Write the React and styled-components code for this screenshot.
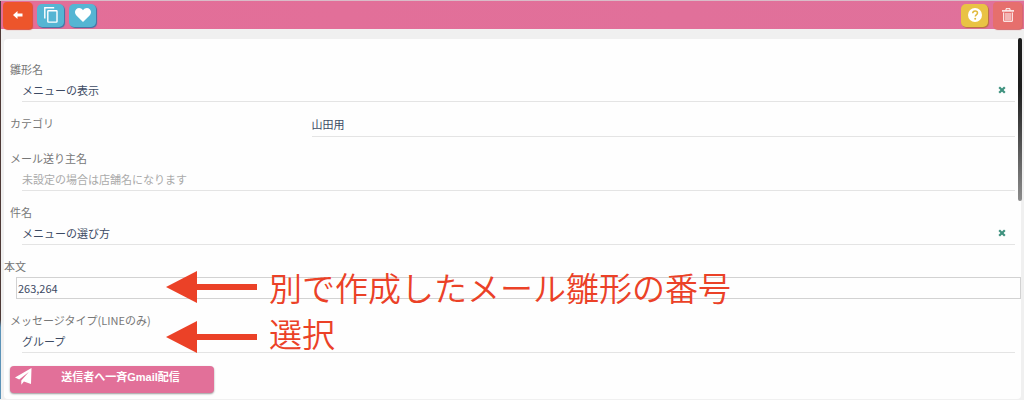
import styled, { createGlobalStyle } from 'styled-components';

const GlobalStyle = createGlobalStyle`
  * {
    box-sizing: border-box;
  }

  body {
    margin: 0;
    background: #f0f0f0;
    font-family: 'Noto Sans CJK JP', sans-serif;
    font-size: 11px;
    line-height: 16px;
    color: #777;
  }

  button,
  input,
  select,
  textarea {
    font: inherit;
  }
`;

const Page = styled.div`
  position: relative;
  padding-left: 1px;
  border-top: 1px solid #d9bcc8;
  background: linear-gradient(#4e3a36 0 80%, #5c93b8 82%) left / 1px 100% no-repeat;
`;

const Toolbar = styled.header`
  display: flex;
  align-items: center;
  justify-content: space-between;
  height: 28px;
  padding: 0 2px;
  background: linear-gradient(90deg, #e36e98, #e0719b);
`;

const ToolGroup = styled.div`
  display: flex;
  align-items: center;
  gap: 5px;
`;

const ToolButton = styled.button`
  display: flex;
  align-items: center;
  justify-content: center;
  width: ${(props) => (props.$large ? 29 : 27)}px;
  height: ${(props) => (props.$large ? 27 : 23)}px;
  padding: 0;
  border: 0;
  border-radius: ${(props) => (props.$large ? 4 : 5)}px;
  color: #fff;
  background: ${(props) => props.$color};
  box-shadow: 1px 1px 1px ${(props) => props.$shadow};
`;

const Card = styled.main`
  margin: 10px 3px 0;
  padding: 22px 0 6px;
  border-radius: 4px;
  background: #fefefe;
`;

const Form = styled.form`
  display: flex;
  flex-direction: column;
  gap: 13px;
`;

const Field = styled.div`
  position: relative;
  display: flex;
  flex-direction: column;
  padding: 0 6px;
`;

const SplitField = styled(Field)`
  display: grid;
  grid-template-columns: 3fr 7fr;
`;

const BodyField = styled(Field)`
  gap: 3px;
  padding: 0;
`;

const Label = styled.label`
  height: 16px;
`;

const InputLine = styled.div`
  display: flex;
  align-items: center;
  height: 25px;
  margin-left: 12px;
  padding: 2px 9px 0 0;
  border-bottom: 1px solid #e4e4e4;
`;

const SplitLine = styled(InputLine)`
  height: 22px;
  margin-left: 0;
  padding: 0 0 4px;
`;

const TextInput = styled.input`
  flex: 1;
  min-width: 0;
  padding: 0;
  border: 0;
  outline: 0;
  color: #3c4a63;
  background: transparent;

  &::placeholder {
    color: #aaa;
    opacity: 1;
  }
`;

const Select = styled.select`
  flex: 1;
  padding: 0;
  border: 0;
  outline: 0;
  appearance: none;
  color: #3c4a63;
  background: transparent;
`;

const BodyText = styled.textarea`
  display: block;
  height: 22px;
  margin-left: 12px;
  padding: 2px 1px;
  border: 1px solid #d2d2d2;
  outline: 0;
  resize: none;
  overflow: hidden;
  color: #3c4a63;
  background: transparent;
`;

const ClearButton = styled.button`
  display: flex;
  padding: 0;
  border: 0;
  color: #3f927f;
  background: none;
`;

const SendButton = styled.button`
  display: flex;
  width: 204px;
  height: 27px;
  margin-left: 6px;
  padding: 2px 5px;
  border: 0;
  border-radius: 4px;
  font-family: 'Liberation Sans', 'Noto Sans CJK JP', sans-serif;
  font-weight: 700;
  color: #fff;
  background: #e27099;
  box-shadow: 0 1px 2px rgba(0, 0, 0, 0.4);
`;

const SendText = styled.span`
  flex: 1;
  padding-top: 1px;
`;

const Note = styled.div`
  position: absolute;
  top: ${(props) => props.$top}px;
  left: 162px;
  display: flex;
  align-items: ${(props) => props.$align || 'center'};
  gap: 12px;
  height: 40px;
  font-size: 33px;
  font-weight: 350;
  line-height: 40px;
  white-space: nowrap;
  color: #eb4127;
  pointer-events: none;
`;

const NoteText = styled.span`
  height: 40px;
`;

const ScrollThumb = styled.div`
  position: absolute;
  top: 37px;
  right: 2px;
  width: 4px;
  height: 163px;
  border-radius: 2px;
  background: linear-gradient(#1d1d1d 30%, #333 45%, #8c8c8c);
`;

function BackIcon() {
  return (
    <svg width="10" height="8" viewBox="0 0 10 8" fill="currentColor">
      <path d="M0 4 4.500 0v2.600H9.500v2.800H4.500V8z" />
    </svg>
  );
}

function CopyIcon() {
  return (
    <svg width="14" height="16" viewBox="0 0 14 16" fill="none" stroke="currentColor" strokeWidth="1.4">
      <path d="M.8 11.5V.8h9.400" />
      <rect x="3.8" y="3.7" width="9.2" height="11.4" rx=".6" />
    </svg>
  );
}

function HeartIcon() {
  return (
    <svg width="16" height="14" viewBox="0 0 16 14" fill="currentColor">
      <path d="M8 14 1.400 7.600C-.5 5.700-.4 2.700 1.200 1.200 3.100-.5 6.300-.3 8 2.300 9.700-.3 12.900-.5 14.800 1.200c1.600 1.500 1.700 4.500-.2 6.400z" />
    </svg>
  );
}

function HelpIcon() {
  return (
    <svg width="14" height="14" viewBox="0 0 14 14">
      <circle cx="7" cy="7" r="7" fill="#fff" />
      <path d="M4.700 5.200C4.800 3.600 5.700 2.900 7.100 2.900c1.400 0 2.400.8 2.400 2 0 1.700-2.200 1.800-2.200 3.700" fill="none" stroke="#e0b93c" strokeWidth="1.5" />
      <circle cx="7.2" cy="10.7" r="1" fill="#e0b93c" />
    </svg>
  );
}

function TrashIcon() {
  return (
    <svg width="12" height="14" viewBox="0 0 12 14" fill="none" stroke="currentColor">
      <path d="M0 2.900h12" strokeWidth="1.4" />
      <path d="M4 2.500V.7h4v1.800" />
      <path d="M1.700 4.500V13.300h8.600V4.500M4 5v7.500M6 5v7.500M8 5v7.500" />
    </svg>
  );
}

function ClearIcon() {
  return (
    <svg width="8" height="8" viewBox="0 0 8 8" stroke="currentColor" strokeWidth="2.2">
      <path d="M1.200 1.200 6.800 6.800M6.800 1.200 1.200 6.800" />
    </svg>
  );
}

function PlaneIcon() {
  return (
    <svg width="17" height="17" viewBox="0 0 17 17" fill="currentColor">
      <path d="M16.500 0 0 9.600l4.200 2L13.800 4.100 6.300 12.500v4.300l2.600-3.200 7.100 2.500z" />
    </svg>
  );
}

function NoteArrow() {
  return (
    <svg width="91" height="32" viewBox="0 0 91 32" fill="#eb4127">
      <path d="M0 16 31 0v13h60v6H31v13z" />
    </svg>
  );
}

function ClearableField({ id, label, value }) {
  return (
    <Field>
      <Label htmlFor={id}>{label}</Label>
      <InputLine>
        <TextInput id={id} defaultValue={value} />
        <ClearButton type="button" aria-label="クリア">
          <ClearIcon />
        </ClearButton>
      </InputLine>
    </Field>
  );
}

function App() {
  return (
    <Page>
      <GlobalStyle />
      <Toolbar>
        <ToolGroup>
          <ToolButton $large $color="#ed552b" $shadow="#d94f3c" aria-label="戻る">
            <BackIcon />
          </ToolButton>
          <ToolButton $color="#55b5d3" $shadow="#3b74a4" aria-label="コピー">
            <CopyIcon />
          </ToolButton>
          <ToolButton $color="#55b5d3" $shadow="#3b74a4" aria-label="お気に入り">
            <HeartIcon />
          </ToolButton>
        </ToolGroup>
        <ToolGroup>
          <ToolButton $color="#e9c344" $shadow="#b9733f" aria-label="ヘルプ">
            <HelpIcon />
          </ToolButton>
          <ToolButton $large $color="#e66f6d" $shadow="#d4686c" aria-label="削除">
            <TrashIcon />
          </ToolButton>
        </ToolGroup>
      </Toolbar>
      <Card>
        <Form>
          <ClearableField id="name" label="雛形名" value="メニューの表示" />
          <SplitField>
            <Label htmlFor="category">カテゴリ</Label>
            <SplitLine>
              <Select id="category">
                <option>山田用</option>
              </Select>
            </SplitLine>
          </SplitField>
          <Field>
            <Label htmlFor="sender">メール送り主名</Label>
            <InputLine>
              <TextInput id="sender" placeholder="未設定の場合は店舗名になります" />
            </InputLine>
          </Field>
          <ClearableField id="subject" label="件名" value="メニューの選び方" />
          <BodyField>
            <Label htmlFor="body">本文</Label>
            <BodyText id="body" rows={1} defaultValue="263,264" />
            <Note $top={9}>
              <NoteArrow />
              <NoteText>別で作成したメール雛形の番号</NoteText>
            </Note>
          </BodyField>
          <Field>
            <Label htmlFor="type">メッセージタイプ(LINEのみ)</Label>
            <InputLine>
              <Select id="type">
                <option>グループ</option>
              </Select>
            </InputLine>
            <Note $top={1} $align="flex-end">
              <NoteArrow />
              <NoteText>選択</NoteText>
            </Note>
          </Field>
          <SendButton type="button">
            <PlaneIcon />
            <SendText>送信者へ一斉Gmail配信</SendText>
          </SendButton>
        </Form>
      </Card>
      <ScrollThumb />
    </Page>
  );
}

export default App;
